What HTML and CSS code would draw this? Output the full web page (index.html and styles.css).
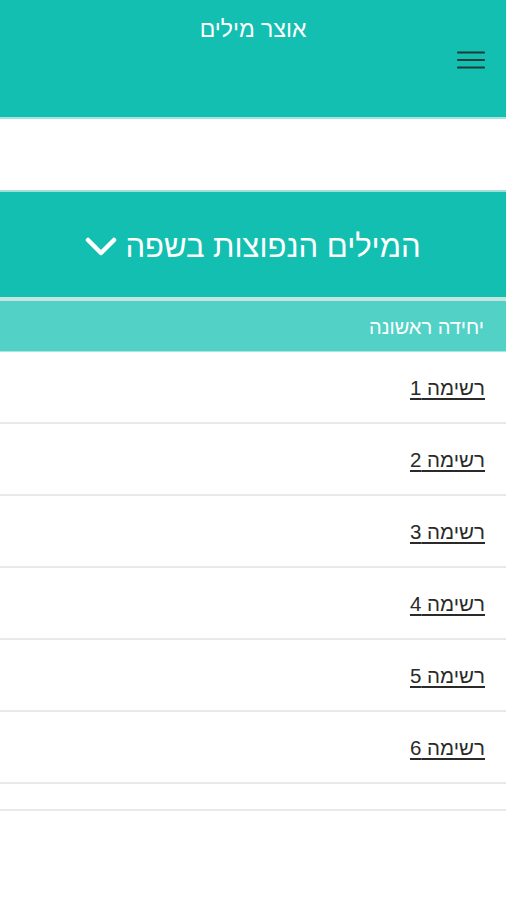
FILE: index.html
```html
<!DOCTYPE html>
<html lang="he" dir="rtl">
<head>
<meta charset="utf-8">
<link rel="stylesheet" href="styles.css">
</head>
<body>
<header class="topbar">
  <h1 class="title">אוצר מילים</h1>
  <div class="menu-row">
    <button class="burger" aria-label="menu">
      <svg width="28" height="20" viewBox="0 0 28 20"><path d="M1 2.5H27M1 10H27M1 17.5H27" stroke="#1f3b3a" stroke-width="2.2" stroke-linecap="round"/></svg>
    </button>
  </div>
</header>
<div class="spacer"></div>
<section class="category">
  <h2 class="cat-title">המילים הנפוצות בשפה
    <svg class="chev" width="32" height="20" viewBox="0 0 32 20"><path d="M3 3L16 16L29 3" fill="none" stroke="#fff" stroke-width="4.5" stroke-linecap="round" stroke-linejoin="round"/></svg>
  </h2>
</section>
<div class="unit">יחידה ראשונה</div>
<ul class="lists">
  <li class="row"><a href="#">רשימה 1</a></li>
  <li class="row"><a href="#">רשימה 2</a></li>
  <li class="row"><a href="#">רשימה 3</a></li>
  <li class="row"><a href="#">רשימה 4</a></li>
  <li class="row"><a href="#">רשימה 5</a></li>
  <li class="row"><a href="#">רשימה 6</a></li>
  <li class="row empty"></li>
</ul>
</body>
</html>
```
FILE: styles.css
```css
* { box-sizing: border-box; }
html, body { margin: 0; padding: 0; background: #fff; }
body { font-family: "Liberation Sans", Arial, sans-serif; direction: rtl; }

.topbar {
  background: #12bfb1;
  height: 119px;
  border-bottom: 2px solid #a3e5de;
  display: flex;
  flex-direction: column;
}
.title {
  margin: 0;
  padding-top: 15px;
  text-align: center;
  color: #fff;
  font-size: 23px;
  font-weight: normal;
  line-height: 28px;
}
.menu-row { display: flex; padding-right: 21px; margin-top: 7px; }
.burger {
  background: none; border: 0; padding: 0; width: 28px; height: 20px; display: block;
}
.burger svg { display: block; }

.spacer { height: 71px; }

.category {
  background: #12bfb1;
  border-top: 2px solid #9fdfd8;
  height: 107px;
  display: flex;
  align-items: center;
  justify-content: center;
}
.cat-title {
  margin: 0;
  color: #fff;
  font-size: 31px;
  font-weight: normal;
  display: flex;
  align-items: center;
  gap: 8px;
  padding-top: 4px;
}
.chev { display: block; margin-top: 0; }

.unit {
  background: #52d2c6;
  border-top: 4px solid #c5e5e1;
  border-bottom: 1px solid #a8e6e0;
  height: 55px;
  color: #fff;
  font-size: 20px;
  padding-right: 22px;
  padding-top: 3px;
  display: flex;
  align-items: center;
}

.lists { list-style: none; margin: 0; padding: 0; }
.row {
  height: 72px;
  border-bottom: 2px solid #e9e9e9;
  display: flex;
  align-items: center;
  padding-right: 21px;
  padding-top: 2px;
}
.row a {
  color: #2a2a2a;
  font-size: 20.5px;
  text-decoration: underline;
  text-underline-offset: 3px;
}
.row.empty { height: 27px; }
```
